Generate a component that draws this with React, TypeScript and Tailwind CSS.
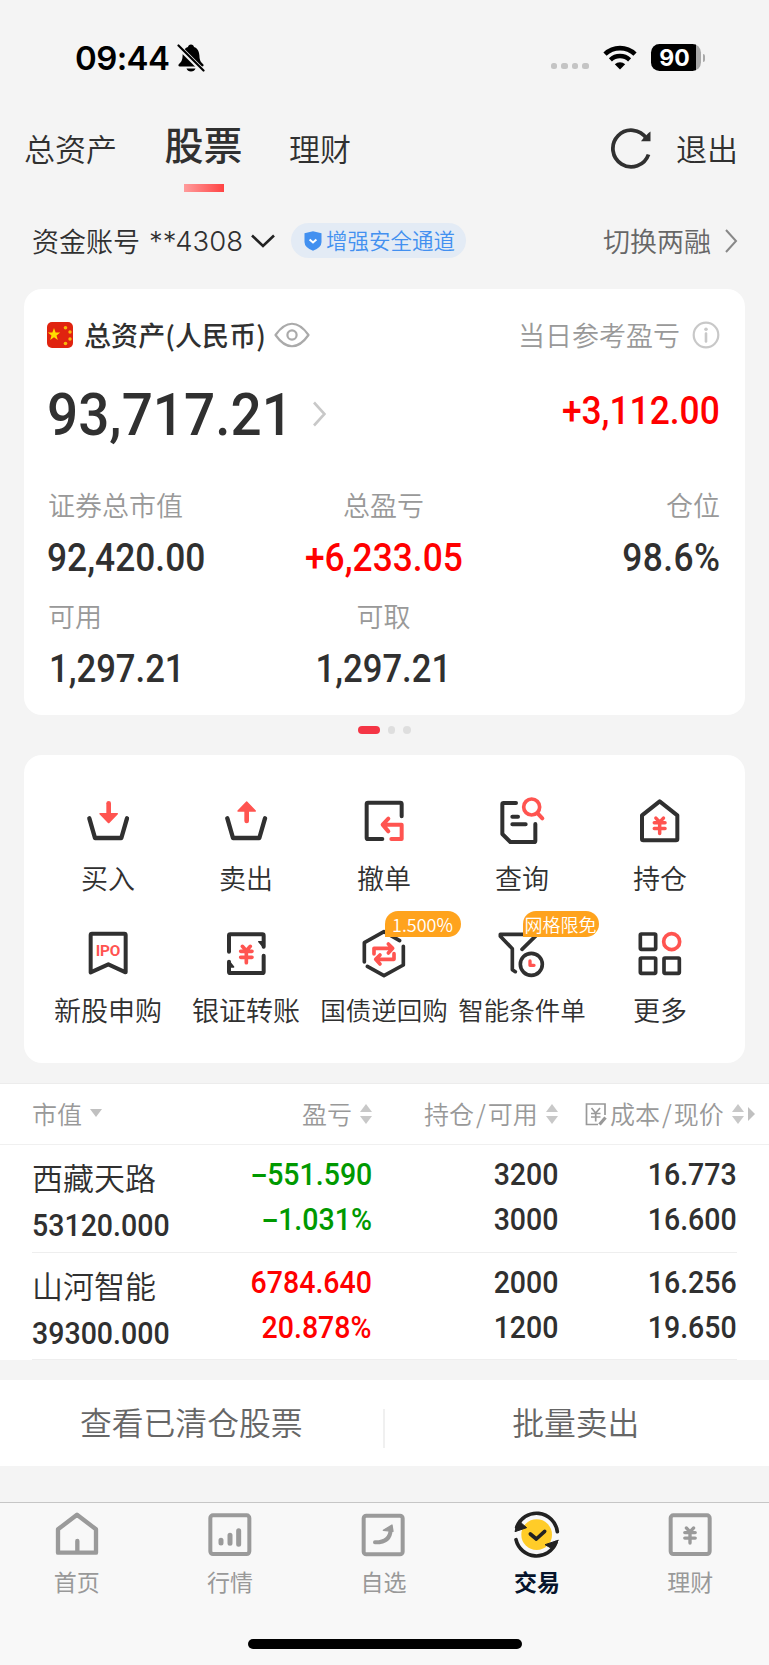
import React from "react";

const CJK = "font-['Noto_Sans_CJK_SC',sans-serif] font-[350]";
const INK = "#303030";
const RED = "#ff5450";
const GREY = "#9a9a9a";

function Num({ children, fit = "normal", className = "" }: { children: React.ReactNode; fit?: "normal" | "tight" | "slim"; className?: string }) {
  const scale = { normal: "scale-x-[0.93]", tight: "scale-x-[0.92]", slim: "scale-x-[0.912]" }[fit];
  return (
    <span className={`inline-block whitespace-nowrap font-['Roboto',sans-serif] font-medium leading-none ${scale} ${className}`}>
      {children}
    </span>
  );
}

function Icon({ box, className = "size-[60px]", children }: { box: string; className?: string; children: React.ReactNode }) {
  return (
    <svg viewBox={box} className={`block shrink-0 ${className}`} fill="none" strokeLinecap="round" strokeLinejoin="round">
      {children}
    </svg>
  );
}

function StatusBar() {
  return (
    <div className="flex h-[115px] items-center pl-[75px] pr-[64px] text-black">
      <span className="mt-[1px] font-['Inter',sans-serif] text-[33px] font-semibold leading-none tracking-[-0.6px]">09:44</span>
      <svg viewBox="0 0 28 28" className="ml-[8px] h-[28px] w-[28px]">
        <path d="M14 .5c-1.700 0-2.700 1-3 2.400C7.300 4.300 5.800 7.500 5.600 11.500c-.2 5-1.400 6.500-3.600 8.500-1 1-.7 2.500.9 2.500h22.200c1.600 0 1.900-1.500.9-2.500-2.200-2-3.400-3.500-3.600-8.500-.2-4-1.700-7.200-5.400-8.600C16.700 1.500 15.700.5 14 .5zM9.500 24.500h9c-.6 2-2.300 3-4.500 3s-3.900-1-4.500-3z" fill="#000" />
        <path d="M1.500 2.500 L26.500 27.500" stroke="#f4f4f4" strokeWidth="5" />
        <path d="M1.500 1.500 L26.500 26.500" stroke="#000" strokeWidth="2.200" strokeLinecap="round" />
      </svg>
      <div className="ml-auto mt-[17px] flex gap-[4px]">
        {[0, 1, 2, 3].map((i) => (
          <i key={i} className="block h-[6px] w-[6.600px] rounded-[2.500px] bg-[#c4c4c4]" />
        ))}
      </div>
      <svg viewBox="0 0 34 25" className="ml-[14px] h-[25px] w-[34px]" fill="none" stroke="#000">
        <path d="M2 9.200 A21.500 21.500 0 0 1 32 9.200" strokeWidth="4.600" />
        <path d="M7.400 14.800 A14 14 0 0 1 26.600 14.800" strokeWidth="4.400" />
        <path d="M17 24.500 L11.800 19.200 A7.600 7.600 0 0 1 22.200 19.200 Z" fill="#000" stroke="none" />
      </svg>
      <div className="ml-[14px] flex h-[27px] w-[50px] items-center justify-center rounded-[8.500px] bg-[linear-gradient(90deg,#000_45px,#a9a9a9_45px)] pr-[3px] pt-[1px] font-['Inter',sans-serif] text-[23px] font-bold leading-none text-white">90</div>
      <i className="ml-[1.500px] block h-[8px] w-[2.500px] rounded-r-full bg-[#a9a9a9]" />
    </div>
  );
}

function TopTabs() {
  return (
    <div className="flex h-[85px] items-start pl-[24px] pr-[31px] text-[#303030]">
      <span className="mt-[17px] text-[31px] leading-[31px]">总资产</span>
      <div className="ml-[47.500px] flex flex-col items-center">
        <span className="mt-[9px] text-[39px] font-medium leading-[39px]">股票</span>
        <i className="mt-[20.500px] block h-[8px] w-[40px] bg-[linear-gradient(90deg,#ff9c9c,#ff4343)]" />
      </div>
      <span className="ml-[46.500px] mt-[17px] text-[31px] leading-[31px]">理财</span>
      <svg viewBox="0 0 42 42" className="ml-auto mt-[12px] size-[42px]" fill="none">
        <path d="M38.500 27.500 A18.300 18.300 0 1 1 36.500 11.500" stroke={INK} strokeWidth="3.800" />
        <path d="M40.500 4.500 V14.200 H31 L33.500 11 L38.500 6 Z" fill={INK} />
      </svg>
      <span className="ml-[24px] mt-[17px] text-[31px] leading-[31px]">退出</span>
    </div>
  );
}

function AccountRow() {
  return (
    <div className="flex h-[82px] items-center pl-[32px] pr-[31px] text-[27px] leading-none text-[#303030]">
      <span className="-mt-[2px]">资金账号</span>
      <span className="ml-[9px] mt-[1px] font-['Inter',sans-serif] text-[27.500px] font-light">**4308</span>
      <svg viewBox="0 0 26 16" className="ml-[7px] h-[16px] w-[26px]" fill="none">
        <path d="M2 2.500 L13 13 L24 2.500" stroke="#222" strokeWidth="2.600" />
      </svg>
      <div className="-mt-[1px] ml-[15px] flex h-[35px] w-[175px] items-center rounded-full bg-[#e3ebf5] pl-[13px] text-[21.500px] text-[#4290f0]">
        <svg viewBox="0 0 18 20" className="mr-[4px] h-[20px] w-[18px] shrink-0" fill="none">
          <path d="M9 0.300 L17.500 2.200 V11 Q17.500 16.500 9 19.700 Q.5 16.500 .5 11 V2.200 Z" fill="#4290f0" />
          <path d="M5.600 8.500 L9 11.500 L12.400 8.500" stroke="#fff" strokeWidth="2" />
        </svg>
        <span className="-mt-[1px] whitespace-nowrap">增强安全通道</span>
      </div>
      <span className="-mt-[2px] ml-auto text-[#666]">切换两融</span>
      <svg viewBox="0 0 14 24" className="ml-[13px] h-[24px] w-[14px]" fill="none">
        <path d="M2 1 L12 12 L2 23" stroke="#888" strokeWidth="2" />
      </svg>
    </div>
  );
}

function Flag() {
  return (
    <svg viewBox="0 0 26 26" className="size-[26px]">
      <rect width="26" height="26" rx="5" fill="#e0230f" />
      <path d="M7 6 L8.600 10.500 L13.200 10.600 L9.500 13.400 L10.800 17.900 L7 15.200 L3.200 17.900 L4.500 13.400 L.8 10.600 L5.400 10.500 Z" fill="#ffde00" />
      <g fill="#f8b80a">
        <circle cx="18.500" cy="5.700" r="1.800" />
        <circle cx="23" cy="10" r="1.700" />
        <circle cx="23" cy="17" r="1.700" />
        <circle cx="18.500" cy="21.500" r="1.800" />
      </g>
    </svg>
  );
}

function Metric({ label, value, align, red, slim }: { label: string; value: string; align: "left" | "center" | "right"; red?: boolean; slim?: boolean }) {
  const box = { left: "items-start", center: "items-center", right: "items-end" }[align];
  const origin = { left: slim ? "origin-left ml-[2px]" : "origin-left", center: "origin-center", right: "origin-right tracking-[0.4px]" }[align];
  return (
    <div className={`flex h-[111px] flex-col ${box}`}>
      <span className={`text-[27px] leading-[27px] text-[#999] ${align === "left" ? "ml-[1px]" : ""}`}>{label}</span>
      <Num fit={slim ? "slim" : "normal"} className={`mt-[21px] text-[38px] ${origin} ${red ? "text-[#ff0000]" : "text-[#303030]"}`}>{value}</Num>
    </div>
  );
}

function AssetCard() {
  return (
    <div className="mx-[24px] h-[426px] rounded-[18px] bg-white pl-[23px] pr-[25px] pt-[32px]">
      <div className="flex h-[28px] items-center text-[27px] leading-none">
        <Flag />
        <span className="-mt-[2px] ml-[11px] font-medium tracking-[0.1px] text-[#303030]">总资产(人民币)</span>
        <svg viewBox="0 0 36 26" className="ml-[8px] h-[26px] w-[36px]" fill="none" stroke="#aaa" strokeWidth="2.200">
          <path d="M1.500 13 C12 -2 24 -2 34.500 13 C24 28 12 28 1.500 13 Z" strokeLinejoin="round" />
          <circle cx="18" cy="13" r="4.600" />
        </svg>
        <span className="-mt-[2px] ml-auto text-[#999]">当日参考盈亏</span>
        <svg viewBox="0 0 28 28" className="ml-[12px] size-[28px]" fill="none" stroke="#c8c8c8">
          <circle cx="14" cy="14" r="12.300" strokeWidth="2.200" />
          <circle cx="14" cy="8.300" r="1.800" fill="#c8c8c8" stroke="none" />
          <path d="M14 12.500 V20.500" strokeWidth="2.600" strokeLinecap="round" />
        </svg>
      </div>
      <div className="flex h-[82px] items-center pt-[48px]">
        <Num className="w-[263px] origin-left text-[59px] text-[#303030]">93,717.21</Num>
        <svg viewBox="0 0 14 26" className="ml-[2px] h-[26px] w-[14px]" fill="none">
          <path d="M2 1.500 L12.500 13 L2 24.500" stroke="#c8c8c8" strokeWidth="2.600" />
        </svg>
        <Num className="-mt-[7px] ml-auto origin-right text-[38px] text-[#ff0000]">+3,112.00</Num>
      </div>
      <div className="grid grid-cols-3 pt-[60px]">
        <Metric label="证券总市值" value="92,420.00" align="left" />
        <Metric label="总盈亏" value="+6,233.05" align="center" red />
        <Metric label="仓位" value="98.6%" align="right" />
        <Metric label="可用" value="1,297.21" align="left" slim />
        <Metric label="可取" value="1,297.21" align="center" slim />
      </div>
    </div>
  );
}

function Pager() {
  return (
    <div className="flex h-[40px] items-start justify-center gap-[8px] pr-[1px] pt-[11px]">
      <i className="block h-[8px] w-[22px] rounded-full bg-[#f43545]" />
      <i className="block h-[8px] w-[7.500px] rounded-full bg-[#dedede]" />
      <i className="block h-[8px] w-[7.500px] rounded-full bg-[#dedede]" />
    </div>
  );
}

const yen = (cx: number, cy: number, s: number) => (
  <g transform={`translate(${cx} ${cy}) scale(${s})`}>
    <path d="M-12 -24 L0 -11 L12 -24 M-17 -9 H17 M-17 9 H17 M0 -11 V25" />
  </g>
);

const actions = [
  {
    label: "买入",
    icon: (
      <Icon box="144 66 180 180">
        <path d="M178 145 L195 204 H274 L291 145" stroke={INK} strokeWidth="13" />
        <path d="M236 100 V135" stroke={RED} strokeWidth="14" />
        <path d="M210 131 H262 L236 158 Z" fill={RED} stroke={RED} strokeWidth="4" />
      </Icon>
    ),
  },
  {
    label: "卖出",
    icon: (
      <Icon box="558 66 180 180">
        <path d="M592 145 L609 204 H688 L705 145" stroke={INK} strokeWidth="13" />
        <path d="M650 153 V118" stroke={RED} strokeWidth="14" />
        <path d="M624 123 H676 L650 96 Z" fill={RED} stroke={RED} strokeWidth="4" />
      </Icon>
    ),
  },
  {
    label: "撤单",
    icon: (
      <Icon box="972 66 180 180">
        <path d="M1057 207 H1014 Q1010 207 1010 203 V102 Q1010 98 1014 98 H1111 Q1115 98 1115 102 V139" stroke={INK} strokeWidth="12" />
        <path d="M1075 146 L1058 164 L1075 184 M1058 164 H1115 V207 H1084" stroke={RED} strokeWidth="12" />
      </Icon>
    ),
  },
  {
    label: "查询",
    icon: (
      <Icon box="336 66 180 180">
        <path d="M408 99 H371 Q367 99 367 103 V192 L391 216 H462 Q466 216 466 212 V162 M397 140 H414 M397 163 H437" stroke={INK} strokeWidth="12" />
        <circle cx="455" cy="111" r="24" stroke={RED} strokeWidth="11" />
        <path d="M473 130 L487 145" stroke={RED} strokeWidth="12" />
      </Icon>
    ),
  },
  {
    label: "持仓",
    icon: (
      <Icon box="750 66 180 180">
        <path d="M786 207 V136 L839 94 L892 136 V207 Q892 211 888 211 H790 Q786 211 786 207 Z" stroke={INK} strokeWidth="12" />
        <g stroke={RED} strokeWidth="11">{yen(839, 167, 0.95)}</g>
      </Icon>
    ),
  },
  {
    label: "新股申购",
    icon: (
      <Icon box="144 57 180 180">
        <path d="M182 202 V90 Q182 86 186 86 H283 Q287 86 287 90 V202 L235 178 Z" stroke={INK} strokeWidth="12" />
        <text x="234" y="154" textAnchor="middle" fill={RED} className="font-['Roboto',sans-serif] text-[46px] font-bold" textLength="74">IPO</text>
      </Icon>
    ),
  },
  {
    label: "银证转账",
    icon: (
      <Icon box="558 57 180 180">
        <path d="M597 140 V92 Q597 88 601 88 H697 Q701 88 701 92 V125 M701 152 V200 Q701 204 697 204 H601 Q597 204 597 200 V170" stroke={INK} strokeWidth="12" />
        <path d="M686 110 L701 128 V110 Z M597 168 V186 H611 Z" fill={INK} stroke={INK} strokeWidth="4" />
        <g stroke={RED} strokeWidth="11">{yen(649, 148, 1)}</g>
      </Icon>
    ),
  },
  {
    label: "国债逆回购",
    tag: "1.500%",
    icon: (
      <Icon box="972 57 180 180">
        <path d="M1003 171 V113 L1062 80 L1109 107 M1120 124 V180 L1062 212 L1012 184" stroke={INK} strokeWidth="11" />
        <path d="M1032 147 V130 H1086 M1075 117 L1088 130 L1075 144 M1092 146 V163 H1038 M1050 150 L1037 163 L1050 177" stroke={RED} strokeWidth="11" />
      </Icon>
    ),
  },
  {
    label: "智能条件单",
    tag: "网格限免",
    icon: (
      <Icon box="336 57 180 180">
        <path d="M470 88 H361 V94 L397 131 V194 L406 200 M468 92 L426 133" stroke={INK} strokeWidth="11" />
        <circle cx="454" cy="178" r="33" stroke={INK} strokeWidth="11" />
        <path d="M450 168 V181 H462" stroke={RED} strokeWidth="10" />
      </Icon>
    ),
  },
  {
    label: "更多",
    icon: (
      <Icon box="750 57 180 180">
        <g stroke={INK} strokeWidth="11">
          <rect x="781" y="87" width="46" height="46" rx="3" />
          <rect x="781" y="159" width="46" height="46" rx="3" />
          <rect x="852" y="159" width="46" height="46" rx="3" />
        </g>
        <circle cx="875" cy="110" r="24" stroke={RED} strokeWidth="11" />
      </Icon>
    ),
  },
];

function ActionGrid() {
  return (
    <div className="mx-[24px] grid h-[308px] grid-cols-5 content-start rounded-[18px] bg-white pl-[15px] pr-[16px] pt-[37px]">
      {actions.map((a) => (
        <div key={a.label} className="relative flex h-[132px] flex-col items-center">
          {a.icon}
          <span className={`whitespace-nowrap leading-[26px] text-[#303030] ${a.tag ? "mt-[12px] text-[25.500px]" : "mt-[13px] text-[27px]"}`}>{a.label}</span>
          {a.tag && (
            <span className="absolute left-[69.500px] top-[-13px] flex h-[26px] w-[76px] items-center justify-center whitespace-nowrap rounded-[13px] rounded-bl-none bg-[#ffa31d] pb-[1px] text-[18px] leading-none text-white">
              {a.tag}
            </span>
          )}
        </div>
      ))}
    </div>
  );
}

function Sort() {
  return (
    <svg viewBox="0 0 12 20" className="mt-[1px] h-[20px] w-[12px] shrink-0" fill="#c8c8c8">
      <path d="M6 0 L12 8 H0 Z M0 12 H12 L6 20 Z" />
    </svg>
  );
}

const holdings = [
  { name: "西藏天路", value: "53120.000", pnl: "-551.590", pct: "-1.031%", qty: "3200", avail: "3000", cost: "16.773", price: "16.600", up: false },
  { name: "山河智能", value: "39300.000", pnl: "6784.640", pct: "20.878%", qty: "2000", avail: "1200", cost: "16.256", price: "19.650", up: true },
];

function Signed({ text }: { text: string }) {
  if (!text.startsWith("-")) return <>{text}</>;
  return (
    <>
      <span className="mr-[3px] inline-block w-[15px] origin-left scale-x-[1.800]">-</span>
      {text.slice(1)}
    </>
  );
}

function Pair({ a, b, className = "text-[#303030]" }: { a: string; b: string; className?: string }) {
  return (
    <div className={`flex flex-col items-end gap-[14px] pt-[14px] text-[31px] ${className}`}>
      <Num fit="tight" className="origin-right"><Signed text={a} /></Num>
      <Num fit="tight" className="origin-right"><Signed text={b} /></Num>
    </div>
  );
}

function Holdings() {
  return (
    <div className="mt-[20px] h-[277px] border-t border-[#ececec] bg-white">
      <div className="flex h-[61px] items-center border-b border-[#f0f0f0] pb-[2px] pl-[32px] text-[25px] leading-none text-[#999]">
        <div className="flex w-[270px] items-center">
          市值
          <svg viewBox="0 0 12 8" className="ml-[8px] h-[8px] w-[12px]" fill="#c0c0c0"><path d="M0 0 H12 L6 8 Z" /></svg>
        </div>
        <div className="flex w-[122px] items-center gap-[8px]">盈亏<Sort /></div>
        <div className="flex w-[161px] items-center gap-[8px]"><span>持仓<span className="mx-[2px]">/</span>可用</span><Sort /></div>
        <svg viewBox="0 0 22 24" className="mr-[3px] mt-[2px] h-[24px] w-[22px] shrink-0" fill="none" stroke="#999" strokeWidth="1.700">
          <path d="M13 22.500 H1.500 V2 H20 V13" />
          <path d="M6.500 6 L10.700 11 L15 6 M6 11.500 H15.500 M6 15 H15.500 M10.700 11 V19.500" />
          <path d="M14.500 22.500 L20.500 15.500" strokeWidth="3.200" />
        </svg>
        <div className="flex items-center gap-[8px] whitespace-nowrap"><span>成本<span className="mx-[2px]">/</span>现价</span><Sort /></div>
        <svg viewBox="0 0 7 14" className="ml-[4px] mt-[1px] h-[14px] w-[7px] shrink-0" fill="#c0c0c0"><path d="M0 0 L7 7 L0 14 Z" /></svg>
      </div>
      {holdings.map((h) => (
        <div key={h.name} className="mx-[32px] grid h-[107.500px] grid-cols-[160px_180px_186px_179px] border-b border-[#eeeeee]">
          <div className="flex flex-col pt-[16px] text-[#303030]">
            <span className="text-[31px] leading-[31px]">{h.name}</span>
            <Num fit="tight" className="mt-[18px] origin-left text-[31px]">{h.value}</Num>
          </div>
          <Pair a={h.pnl} b={h.pct} className={h.up ? "text-[#ff0000]" : "text-[#009900]"} />
          <Pair a={h.qty} b={h.avail} />
          <Pair a={h.cost} b={h.price} />
        </div>
      ))}
    </div>
  );
}

function BulkActions() {
  return (
    <div className="mt-[20px] flex h-[86px] items-center bg-white pr-[2px] text-[31.800px] leading-none text-[#666]">
      <span className="-mt-[2px] flex-1 text-center">查看已清仓股票</span>
      <i className="mt-[11px] block h-[39px] w-[2px] bg-[#f0f0f0]" />
      <span className="-mt-[2px] flex-1 text-center">批量卖出</span>
    </div>
  );
}

const tabs = [
  {
    label: "首页",
    icon: (
      <Icon box="141 45 180 180">
        <path d="M174 188 V118 L231 74 L288 118 V188 Z M232 153 V186" stroke={GREY} strokeWidth="13" />
      </Icon>
    ),
  },
  {
    label: "行情",
    icon: (
      <Icon box="599 45 180 180">
        <rect x="630" y="76" width="117" height="116" rx="8" stroke={GREY} strokeWidth="12" />
        <path d="M662 151 V159 M689 136 V160 M715 122 V163" stroke={GREY} strokeWidth="15" />
      </Icon>
    ),
  },
  {
    label: "自选",
    icon: (
      <Icon box="1060 45 180 180">
        <rect x="1092" y="77" width="117" height="116" rx="8" stroke={GREY} strokeWidth="12" />
        <path d="M1126 157 Q1172 158 1173 118" stroke={GREY} strokeWidth="12" />
        <path d="M1151 121 L1177 105 L1180 124 Z" fill={GREY} stroke={GREY} strokeWidth="4" />
      </Icon>
    ),
  },
  {
    label: "交易",
    active: true,
    icon: (
      <Icon box="413 45 180 180">
        <circle cx="502" cy="134" r="46" fill="#ffcc28" />
        <path d="M442 112 A63 63 0 0 1 564 125 M440 149 A63 63 0 0 0 560 158" stroke="#222" strokeWidth="11" />
        <path d="M451 95 L472 113 L437 125 Q439 106 451 95 Z M566 151 L527 164 L550 177 Q561 168 566 151 Z" fill="#222" stroke="#222" strokeWidth="3" />
        <path d="M483 132 L501 147 L526 124" stroke="#222" strokeWidth="11" />
      </Icon>
    ),
  },
  {
    label: "理财",
    icon: (
      <Icon box="873 45 180 180">
        <rect x="905" y="76" width="117" height="116" rx="8" stroke={GREY} strokeWidth="12" />
        <g stroke={GREY} strokeWidth="11">{yen(963, 136, 0.92)}</g>
      </Icon>
    ),
  },
];

function TabBar() {
  return (
    <div className="mt-[36px] flex h-[163px] flex-col border-t border-[#c6c6c6] bg-[#f8f8f8]">
      <div className="grid w-[767px] grid-cols-5 pt-[2px]">
        {tabs.map((t) => (
          <div key={t.label} className="flex flex-col items-center">
            {t.icon}
            <span className={`mt-[5px] text-[23px] leading-[23px] ${t.active ? "font-bold text-[#06142b]" : "font-normal text-[#999]"}`}>{t.label}</span>
          </div>
        ))}
      </div>
      <i className="mx-auto mt-[46px] block h-[10px] w-[274px] rounded-full bg-black" />
    </div>
  );
}

export default function App() {
  return (
    <div className={`h-[1665px] w-[769px] overflow-hidden bg-[#f4f4f4] ${CJK}`}>
      <StatusBar />
      <TopTabs />
      <AccountRow />
      <div className="h-[7px]" />
      <AssetCard />
      <Pager />
      <ActionGrid />
      <Holdings />
      <BulkActions />
      <TabBar />
    </div>
  );
}
